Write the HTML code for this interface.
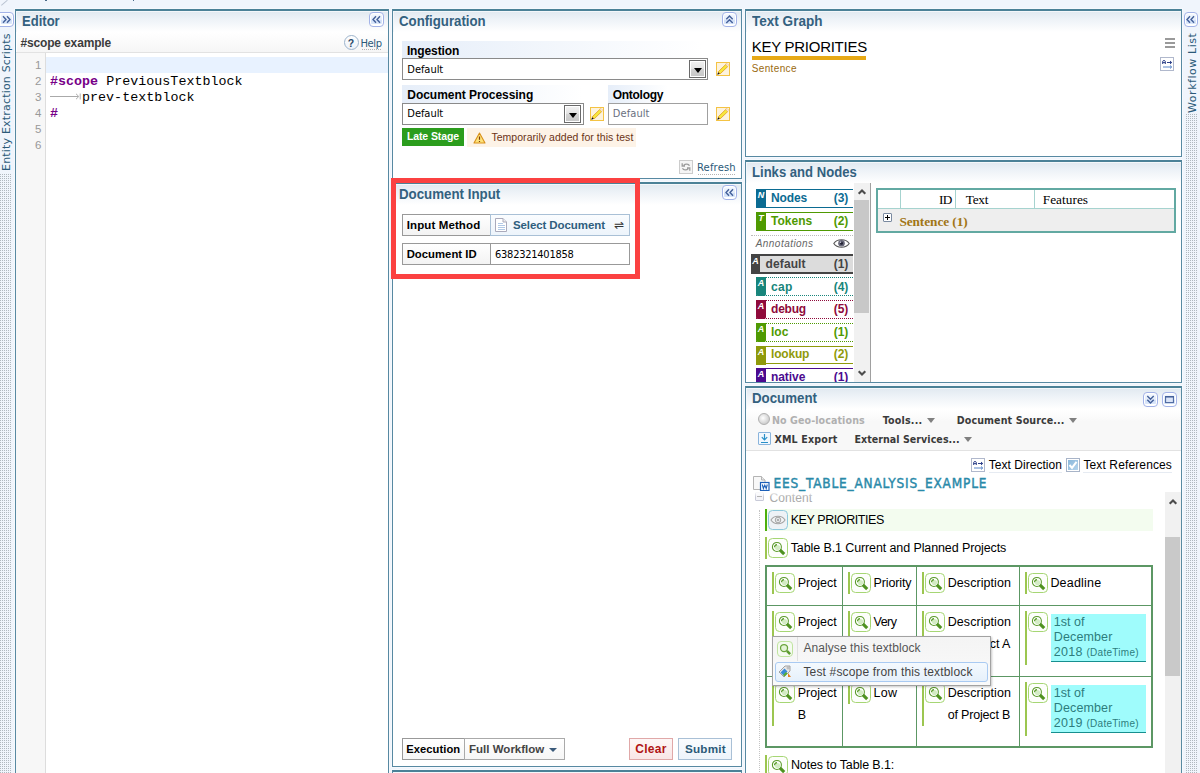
<!DOCTYPE html>
<html><head><meta charset="utf-8"><title>Entity Extraction</title>
<style>
*{box-sizing:border-box;margin:0;padding:0}
html,body{width:1200px;height:773px;overflow:hidden;background:#f0f5fc;font-family:"Liberation Sans",sans-serif;font-size:12px;color:#000}
body{position:relative}
.abs{position:absolute}
.t{position:absolute;white-space:nowrap;line-height:1}
.panel{position:absolute;border:1px solid #5789a2;border-top:2px solid #4b8197;background:#fff;box-shadow:0 0 0 1px #f6f9fd}
.panel .hd{position:absolute;left:0;right:0;top:0;height:21px;background:linear-gradient(#e2eaf1,#edf2f7 35%,#fff 100%);border-top:1px solid #f4f7fa;border-left:1px solid #f4f7fa}
.cbtn{position:absolute;width:15px;height:15px;border:1px solid #a3b3e8;border-radius:4px;background:linear-gradient(#fff 0,#eef4fd 20%,#e4edfb 50%,#cfdff8 51%,#dbe7fa 85%,#fff 86%);box-shadow:inset 0 0 0 1px #fff;overflow:hidden}
.vtext{position:absolute;white-space:nowrap;font-family:"DejaVu Sans",sans-serif;font-size:11px;color:#2b5a79;transform-origin:0 0;transform:rotate(-90deg);line-height:1}
.dots{position:absolute;background-image:radial-gradient(circle at .5px .5px,#b0b8be .55px,transparent .7px);background-size:2px 2px}
.lbl{position:absolute;height:18px;background:linear-gradient(90deg,#e6eef9,#fff)}
.sel{position:absolute;height:22px;border:1px solid #8a8a8a;background:#fff}
.dd{position:absolute;width:17px;height:18px;border:1px solid #6a6a6a;box-shadow:inset 0 0 0 1px #fff;background:linear-gradient(#f3f3f3,#e2e2e2 50%,#d3d3d3 51%,#c6c6c6)}
.dd:after{content:"";position:absolute;left:4px;top:7px;border:4px solid transparent;border-top:5px solid #000;border-bottom:0}
.mbtn{position:absolute;width:20px;height:20px;border:1.200px solid #a6d674;border-radius:4.500px;background:#fdfefb}
.mbtn svg{position:absolute;left:-1.200px;top:-1.200px}
.cell{position:absolute;border:1px solid #999;height:22px}
.tri{position:absolute;width:0;height:0;border:4.5px solid transparent;border-top:5px solid #808080;border-bottom:0}
.li{position:absolute;height:19px}
.li i{position:absolute;left:0;top:-1px;width:10px;height:19px;font-size:9px;color:#fff;line-height:13px;text-align:center;font-style:italic;font-weight:bold}
</style></head><body>
<div class="abs" style="left:1px;top:4.500px;width:8px;height:1.300px;background:#b9c3d1;transform:rotate(-40deg);transform-origin:0 0"></div><div class="abs" style="left:45px;top:0;width:1.500px;height:1px;background:#4a6a88"></div><div class="abs" style="left:132.500px;top:0;width:1.500px;height:1px;background:#4a6a88"></div>

<div class="cbtn" style="left:-1px;top:12px;width:15px;border-radius:0 4px 4px 0;"><svg viewBox="0 0 15 15" width="15" height="15" style="position:absolute;left:-1px;top:-1px" fill="none" stroke="#44609a" stroke-width="1.400"><path d="M4 4.200l3 3.300-3 3.300M8 4.200l3 3.300-3 3.300" /></svg></div>
<div class="vtext" style="left:.500px;top:171px;letter-spacing:.19px">Entity Extraction Scripts</div>
<div class="dots" style="left:0;top:174px;width:12px;height:600px"></div>
<div class="panel" style="left:15px;top:9px;width:374px;height:780px"><div class="hd"></div></div>
<div class="abs" style="left:17px;top:32px;width:371px;height:20px;background:linear-gradient(#fff,#f6f6f6)"></div>
<span class="t" style='left:22.40px;top:14.00px;font-size:14.2px;color:#33617f;font-weight:bold;transform:scaleX(0.9199);transform-origin:0 0;'>Editor</span>
<div class="cbtn" style="left:369px;top:12px;width:15px;"><svg viewBox="0 0 15 15" width="15" height="15" style="position:absolute;left:-1px;top:-1px" fill="none" stroke="#44609a" stroke-width="1.400"><path d="M7 4.200L4 7.500l3 3.300M11 4.200L8 7.500l3 3.300" /></svg></div>
<span class="t" style='left:20.40px;top:37.00px;font-size:12px;color:#3c3c3c;font-weight:bold;letter-spacing:-0.144px;'>#scope example</span>
<div class="abs" style="left:344px;top:35px;width:15px;height:15px;border:1px solid #9db4cc;border-radius:50%;background:linear-gradient(#fff,#eef2f8)"></div>
<span class="t" style='left:347.70px;top:38.00px;font-size:10.5px;color:#2b4a6a;font-weight:bold;letter-spacing:0.778px;'>?</span>
<span class="t" style='left:360.40px;top:39.00px;font-size:10px;font-family:"DejaVu Sans",sans-serif;color:#2b5a79;letter-spacing:-0.403px;'>Help</span>
<div class="abs" style="left:362px;top:49px;width:20px;height:1px;background:repeating-linear-gradient(90deg,#b4b4b4 0 1px,transparent 1px 2px)"></div>
<div class="abs" style="left:16px;top:52px;width:372px;height:1px;background:#e2e2e2"></div>
<div class="abs" style="left:16px;top:53px;width:30px;height:740px;background:#f7f7f7;border-right:1px solid #ddd"></div>
<div class="abs" style="left:46px;top:57px;width:342px;height:16px;background:#e8f2ff"></div>
<div class="t" style="left:16px;width:25.500px;text-align:right;top:59.5px;font-size:11.500px;color:#999;font-family:"DejaVu Sans Condensed","DejaVu Sans",sans-serif">1</div>
<div class="t" style="left:16px;width:25.500px;text-align:right;top:75.5px;font-size:11.500px;color:#999;font-family:"DejaVu Sans Condensed","DejaVu Sans",sans-serif">2</div>
<div class="t" style="left:16px;width:25.500px;text-align:right;top:91.5px;font-size:11.500px;color:#999;font-family:"DejaVu Sans Condensed","DejaVu Sans",sans-serif">3</div>
<div class="t" style="left:16px;width:25.500px;text-align:right;top:107.5px;font-size:11.500px;color:#999;font-family:"DejaVu Sans Condensed","DejaVu Sans",sans-serif">4</div>
<div class="t" style="left:16px;width:25.500px;text-align:right;top:123.5px;font-size:11.500px;color:#999;font-family:"DejaVu Sans Condensed","DejaVu Sans",sans-serif">5</div>
<div class="t" style="left:16px;width:25.500px;text-align:right;top:139.5px;font-size:11.500px;color:#999;font-family:"DejaVu Sans Condensed","DejaVu Sans",sans-serif">6</div>
<span class="t" style='left:50.00px;top:75.00px;font-size:13.33px;font-family:"Liberation Mono",monospace;letter-spacing:0.026px;'><span style="color:#770088;font-weight:bold">#scope</span> PreviousTextblock</span>
<div class="abs" style="left:50px;top:96px;width:28px;height:1px;background:#aaa"></div>
<svg class="abs" style="left:76px;top:93px" width="5" height="7" viewBox="0 0 5 7" fill="none" stroke="#999" stroke-width=".8"><path d="M0 .800l2.800 2.700L0 6.200M4.200 .500v6"/></svg>
<span class="t" style='left:81.90px;top:91.00px;font-size:13.33px;font-family:"Liberation Mono",monospace;letter-spacing:0.051px;'>prev-textblock</span>
<span class="t" style='left:50.00px;top:107.00px;font-size:13.33px;font-family:"Liberation Mono",monospace;color:#770088;font-weight:bold;letter-spacing:0.600px;'>#</span>
<div class="panel" style="left:392px;top:9px;width:350px;height:170px"><div class="hd"></div></div>
<span class="t" style='left:398.60px;top:14.00px;font-size:14.2px;color:#33617f;font-weight:bold;transform:scaleX(0.9323);transform-origin:0 0;'>Configuration</span>
<div class="cbtn" style="left:722px;top:12px;width:15px;"><svg viewBox="0 0 15 15" width="15" height="15" style="position:absolute;left:-1px;top:-1px" fill="none" stroke="#44609a" stroke-width="1.400"><path d="M4.300 7.200L7.500 4l3.200 3.200M4.300 11L7.500 7.800l3.200 3.200" /></svg></div>
<div class="lbl" style="left:402px;top:41px;width:300px"></div>
<span class="t" style='left:406.90px;top:45.00px;font-size:12px;font-weight:bold;letter-spacing:-0.116px;'>Ingestion</span>
<div class="sel" style="left:402px;top:58px;width:306px"></div><div class="dd" style="left:689px;top:60px"></div>
<span class="t" style='left:407.30px;top:64.00px;font-size:11px;font-family:"DejaVu Sans Condensed","DejaVu Sans",sans-serif;letter-spacing:-0.039px;'>Default</span>
<div class="abs" style="left:716px;top:62px;width:14px;height:14px"><svg viewBox="0 0 14 14" width="14" height="14"><rect x=".5" y=".5" width="13" height="13" fill="#fdf3dd" stroke="#f4c344"/><path d="M1.200 12.800l1-3 2 2z" fill="#111"/><path d="M2.200 9.800l7.600-7.400 2.100 2-7.700 7.400z" fill="#f6e83c" stroke="#e39a1e" stroke-width=".8"/><path d="M9.800 2.400l1.100-1 2 2-1 1z" fill="#fff" stroke="#e8b070" stroke-width=".7"/></svg></div>
<div class="lbl" style="left:402px;top:85px;width:180px"></div>
<span class="t" style='left:407.30px;top:89.00px;font-size:12px;font-weight:bold;letter-spacing:-0.042px;'>Document Processing</span>
<div class="sel" style="left:402px;top:103px;width:182px"></div><div class="dd" style="left:564px;top:105px"></div>
<span class="t" style='left:407.30px;top:108.00px;font-size:11px;font-family:"DejaVu Sans Condensed","DejaVu Sans",sans-serif;letter-spacing:-0.039px;'>Default</span>
<div class="abs" style="left:590px;top:107px;width:14px;height:14px"><svg viewBox="0 0 14 14" width="14" height="14"><rect x=".5" y=".5" width="13" height="13" fill="#fdf3dd" stroke="#f4c344"/><path d="M1.200 12.800l1-3 2 2z" fill="#111"/><path d="M2.200 9.800l7.600-7.400 2.100 2-7.700 7.400z" fill="#f6e83c" stroke="#e39a1e" stroke-width=".8"/><path d="M9.800 2.400l1.100-1 2 2-1 1z" fill="#fff" stroke="#e8b070" stroke-width=".7"/></svg></div>
<div class="lbl" style="left:608px;top:85px;width:60px"></div>
<span class="t" style='left:612.80px;top:89.00px;font-size:12px;font-weight:bold;letter-spacing:-0.296px;'>Ontology</span>
<div class="sel" style="left:608px;top:103px;width:100px;border-color:#a0a0a0"></div>
<span class="t" style='left:612.80px;top:108.00px;font-size:11px;font-family:"DejaVu Sans Condensed","DejaVu Sans",sans-serif;color:#6a7080;letter-spacing:0.090px;'>Default</span>
<div class="abs" style="left:716px;top:107px;width:14px;height:14px"><svg viewBox="0 0 14 14" width="14" height="14"><rect x=".5" y=".5" width="13" height="13" fill="#fdf3dd" stroke="#f4c344"/><path d="M1.200 12.800l1-3 2 2z" fill="#111"/><path d="M2.200 9.800l7.600-7.400 2.100 2-7.700 7.400z" fill="#f6e83c" stroke="#e39a1e" stroke-width=".8"/><path d="M9.800 2.400l1.100-1 2 2-1 1z" fill="#fff" stroke="#e8b070" stroke-width=".7"/></svg></div>
<div class="abs" style="left:402px;top:128px;width:62px;height:18px;background:#2b9d1d"></div>
<span class="t" style='left:406.90px;top:131.00px;font-size:10.5px;color:#fff;font-weight:bold;letter-spacing:-0.091px;'>Late Stage</span>
<div class="abs" style="left:467px;top:128px;width:169px;height:19px;background:#fdf3e7"></div>
<svg class="abs" style="left:473px;top:132px" width="13" height="12" viewBox="0 0 13 12"><path d="M6.500 1L12 11H1z" fill="#fde27a" stroke="#d9901a" stroke-width="1.100" stroke-linejoin="round"/><path d="M6.500 4.500v3.300M6.500 9v1" stroke="#7a3a0a" stroke-width="1.200"/></svg>
<span class="t" style='left:491.40px;top:132.00px;font-size:10.5px;color:#6b3316;letter-spacing:0.043px;'>Temporarily added for this test</span>
<div class="abs" style="left:679px;top:160px;width:14px;height:14px;border:1px solid #ccc;background:#f5f5f5"></div>
<svg class="abs" style="left:681px;top:162px" width="10" height="10" viewBox="0 0 10 10" fill="none" stroke="#9c9c9c" stroke-width="1.300"><path d="M8.500 3.800C7.500 1.800 4.500 1.500 2.800 3.200M1.200 1.200v2.800h2.800M1.500 6.200C2.500 8.200 5.500 8.500 7.200 6.800M8.800 8.800V6H6"/></svg>
<span class="t" style='left:696.90px;top:163.00px;font-size:10px;font-family:"DejaVu Sans",sans-serif;color:#2b5a79;letter-spacing:0.176px;'>Refresh</span>
<div class="abs" style="left:698px;top:174px;width:38px;height:1px;background:repeating-linear-gradient(90deg,#b4b4b4 0 1px,transparent 1px 2px)"></div>
<div class="panel" style="left:392px;top:182px;width:350px;height:585px"><div class="hd"></div></div>
<span class="t" style='left:398.90px;top:187.00px;font-size:14.2px;color:#33617f;font-weight:bold;transform:scaleX(0.9372);transform-origin:0 0;'>Document Input</span>
<div class="cbtn" style="left:722px;top:185px;width:15px;"><svg viewBox="0 0 15 15" width="15" height="15" style="position:absolute;left:-1px;top:-1px" fill="none" stroke="#44609a" stroke-width="1.400"><path d="M7 4.200L4 7.500l3 3.300M11 4.200L8 7.500l3 3.300" /></svg></div>
<div class="cell" style="left:402px;top:214px;width:89px;background:linear-gradient(#fff,#f3f3f3)"></div>
<span class="t" style='left:406.70px;top:220.00px;font-size:11.5px;font-weight:bold;letter-spacing:0.118px;'>Input Method</span>
<div class="cell" style="left:490px;top:214px;width:140px;border-color:#a9c0d6;background:linear-gradient(#fafcfe,#edf4fb)"></div>
<svg class="abs" style="left:495px;top:218px" width="12" height="14" viewBox="0 0 12 14"><path d="M.500 .500h7.500l3.500 3.500v9.500h-11z" fill="#fff" stroke="#aab" /><path d="M8 .500v3.500h3.500" fill="#eee" stroke="#aab"/><path d="M2.500 5.500h5M2.500 7.500h7M2.500 9.500h7M2.500 11.500h7" stroke="#9dbbe0" stroke-width=".8" shape-rendering="crispEdges"/></svg>
<span class="t" style='left:512.90px;top:220.00px;font-size:11.5px;color:#2f5e7d;font-weight:bold;letter-spacing:-0.088px;'>Select Document</span>
<span class="t" style='left:614.20px;top:219.00px;font-size:12px;font-family:"DejaVu Sans",sans-serif;color:#333;letter-spacing:0.137px;'>&#x21CC;</span>
<div class="cell" style="left:402px;top:243px;width:89px;background:linear-gradient(#fff,#f3f3f3)"></div>
<span class="t" style='left:406.70px;top:249.00px;font-size:11.3px;font-weight:bold;letter-spacing:0.021px;'>Document ID</span>
<div class="cell" style="left:490px;top:243px;width:140px"></div>
<span class="t" style='left:495.00px;top:249.00px;font-size:11px;font-family:"DejaVu Sans Condensed","DejaVu Sans",sans-serif;letter-spacing:-0.250px;'>6382321401858</span>
<div class="cell" style="left:402px;top:738px;width:63px;background:linear-gradient(#fff,#f6f6f6)"></div>
<span class="t" style='left:406.20px;top:744.00px;font-size:11.2px;font-weight:bold;letter-spacing:0.059px;'>Execution</span>
<div class="cell" style="left:464px;top:738px;width:101px;background:linear-gradient(#fff,#f6f6f6);border-color:#aaa"></div>
<span class="t" style='left:469.00px;top:744.00px;font-size:11.5px;color:#444;font-weight:bold;letter-spacing:0.010px;'>Full Workflow</span>
<div class="tri" style="left:549px;top:748px;border-width:4px;border-top:4.500px solid #3a5a7a"></div>
<div class="cell" style="left:629px;top:738px;width:44px;border-color:#e0a8a8;background:linear-gradient(#fdf6f6,#f9e6e6)"></div>
<span class="t" style='left:635.30px;top:743.00px;font-size:12px;color:#b01414;font-weight:bold;letter-spacing:0.254px;'>Clear</span>
<div class="cell" style="left:678px;top:738px;width:54px;border-color:#a9c0d6;background:linear-gradient(#fafcfe,#edf4fb)"></div>
<span class="t" style='left:685.00px;top:743.00px;font-size:11.7px;color:#2b5a79;font-weight:bold;letter-spacing:0.198px;'>Submit</span>
<div class="panel" style="left:392px;top:770px;width:350px;height:30px"><div class="hd"></div></div>
<div class="abs" style="left:391px;top:178px;width:249px;height:101px;border:5px solid #fb4141"></div>
<div class="panel" style="left:745px;top:9px;width:437px;height:148px"><div class="hd"></div></div>
<span class="t" style='left:751.70px;top:14.00px;font-size:14.2px;color:#33617f;font-weight:bold;transform:scaleX(0.9547);transform-origin:0 0;'>Text Graph</span>
<span class="t" style='left:751.70px;top:39.00px;font-size:15px;letter-spacing:-0.267px;'>KEY PRIORITIES</span>
<div class="abs" style="left:752px;top:56px;width:114px;height:4px;background:#e7a916"></div>
<span class="t" style='left:751.70px;top:64.00px;font-size:10px;color:#9a6a10;letter-spacing:0.367px;'>Sentence</span>
<div class="abs" style="left:1165px;top:38px;width:10px;height:2px;background:#9a9a9a;box-shadow:0 4px 0 #9a9a9a,0 8px 0 #9a9a9a"></div>
<div class="abs" style="left:1160px;top:57px;width:14px;height:14px;border:1px solid #b0b8cc;background:#fff"></div>
<svg class="abs" style="left:1162px;top:59px" width="11" height="10" viewBox="0 0 11 10" fill="none" stroke="#2c3f88" stroke-width="1"><path d="M.700 5V2.300C.700 1.300 3.300 1.300 3.300 2.300V5M.700 3.600h2.600M5 3.500h4.500M8 2l1.700 1.500L8 5"/><path d="M1 8h8.500M8 6.500L9.700 8 8 9.500" stroke="#5a86c8"/></svg>
<div class="panel" style="left:745px;top:160px;width:437px;height:223px"><div class="hd"></div></div>
<span class="t" style='left:751.70px;top:165.00px;font-size:14.2px;color:#33617f;font-weight:bold;transform:scaleX(0.9222);transform-origin:0 0;'>Links and Nodes</span>
<div class="abs" style="left:746px;top:183px;width:125px;height:199px;overflow:hidden">
<div class="li" style="left:10px;width:97px;top:6px;height:19px;border-top:1px solid #0b6b92;border-bottom:1px solid #0b6b92"><i style="background:#0b6b92;">N</i></div>
<div class="li" style="left:10px;width:97px;top:29px;height:19px;border-top:1px solid #4f9a02;border-bottom:1px solid #4f9a02"><i style="background:#4f9a02;">T</i></div>
<div class="li" style="left:5px;width:102px;top:71px;height:20px;background:#dcdcdc;border-top:2px solid #444;border-bottom:2px solid #444"><i style="background:#444;top:-2px;height:20px;width:9px;line-height:14px">A</i></div>
<div class="li" style="left:10px;width:97px;top:94px;height:19px;border-top:1px dotted #17857b;border-bottom:1px dotted #17857b"><i style="background:#17857b;border-radius:0 0 3px 3px / 0 0 2px 2px;">A</i></div>
<div class="li" style="left:10px;width:97px;top:117px;height:19px;border-top:1px dotted #8f0a3b;border-bottom:1px dotted #8f0a3b"><i style="background:#8f0a3b;border-radius:0 0 3px 3px / 0 0 2px 2px;">A</i></div>
<div class="li" style="left:10px;width:97px;top:140px;height:19px;border-top:1px dotted #4f9a02;border-bottom:1px dotted #4f9a02"><i style="background:#4f9a02;border-radius:0 0 3px 3px / 0 0 2px 2px;">A</i></div>
<div class="li" style="left:10px;width:97px;top:163px;height:18px;border-top:1px solid #8f9a0a;border-bottom:1px solid #8f9a0a"><i style="background:#8f9a0a;">A</i></div>
<div class="li" style="left:10px;width:97px;top:185px;height:19px;border-top:1px solid #4b0a8f;border-bottom:1px solid #4b0a8f"><i style="background:#4b0a8f;">A</i></div>
<div class="abs" style="left:5px;top:52px;width:102px;height:0px;border-top:1px dotted #bbb"></div>
<svg class="abs" style="left:87px;top:55px" width="17" height="11" viewBox="0 0 17 11"><path d="M.800 5.500C4 .500 13 .500 16.200 5.500C13 10.500 4 10.500 .800 5.500z" fill="#fff" stroke="#555" stroke-width="1.100"/><circle cx="8.500" cy="5.300" r="3.300" fill="#667"/><circle cx="8.500" cy="5.300" r="1.500" fill="#223"/><circle cx="7.500" cy="4.300" r=".8" fill="#ccd"/></svg>
<div class="abs" style="left:108px;top:0px;width:17px;height:200px;background:#f1f1f1;border-right:1px solid #a0a0a0"></div>
<div class="abs" style="left:108px;top:17px;width:15px;height:113px;background:#c8c8c8"></div>
<svg class="abs" style="left:111px;top:5px" width="10" height="7" viewBox="0 0 10 7" fill="none" stroke="#4c4c4c" stroke-width="2.100"><path d="M1.700 5.700l3.300-3.300 3.300 3.300"/></svg>
<svg class="abs" style="left:111px;top:187px" width="10" height="7" viewBox="0 0 10 7" fill="none" stroke="#4c4c4c" stroke-width="2.100"><path d="M1.700 1.300l3.300 3.300 3.300-3.300"/></svg>
</div>
<div class="abs" style="left:746px;top:183px;width:108px;height:199px;overflow:hidden"><div class="abs" style="left:-746px;top:-183px">
<span class="t" style='left:771.00px;top:192.00px;font-size:12px;color:#0b6b92;font-weight:bold;letter-spacing:-0.097px;'>Nodes</span>
<span class="t" style='left:833.70px;top:192.00px;font-size:12px;color:#0b6b92;font-weight:bold;letter-spacing:-0.024px;'>(3)</span>
<span class="t" style='left:771.00px;top:215.00px;font-size:12px;color:#4f9a02;font-weight:bold;letter-spacing:0.029px;'>Tokens</span>
<span class="t" style='left:833.70px;top:215.00px;font-size:12px;color:#4f9a02;font-weight:bold;letter-spacing:-0.024px;'>(2)</span>
<span class="t" style='left:765.60px;top:258.00px;font-size:12px;color:#444;font-weight:bold;letter-spacing:0.094px;'>default</span>
<span class="t" style='left:833.70px;top:258.00px;font-size:12px;color:#444;font-weight:bold;letter-spacing:-0.024px;'>(1)</span>
<span class="t" style='left:771.00px;top:281.00px;font-size:12px;color:#17857b;font-weight:bold;letter-spacing:0.304px;'>cap</span>
<span class="t" style='left:833.70px;top:281.00px;font-size:12px;color:#17857b;font-weight:bold;letter-spacing:-0.024px;'>(4)</span>
<span class="t" style='left:771.00px;top:303.00px;font-size:12px;color:#8f0a3b;font-weight:bold;letter-spacing:-0.200px;'>debug</span>
<span class="t" style='left:833.70px;top:303.00px;font-size:12px;color:#8f0a3b;font-weight:bold;letter-spacing:-0.024px;'>(5)</span>
<span class="t" style='left:771.00px;top:326.00px;font-size:12px;color:#4f9a02;font-weight:bold;letter-spacing:0.019px;'>loc</span>
<span class="t" style='left:833.70px;top:326.00px;font-size:12px;color:#4f9a02;font-weight:bold;letter-spacing:-0.024px;'>(1)</span>
<span class="t" style='left:771.00px;top:348.00px;font-size:12px;color:#8f9a0a;font-weight:bold;letter-spacing:-0.188px;'>lookup</span>
<span class="t" style='left:833.70px;top:348.00px;font-size:12px;color:#8f9a0a;font-weight:bold;letter-spacing:-0.024px;'>(2)</span>
<span class="t" style='left:771.00px;top:371.00px;font-size:12px;color:#4b0a8f;font-weight:bold;letter-spacing:-0.065px;'>native</span>
<span class="t" style='left:833.70px;top:371.00px;font-size:12px;color:#4b0a8f;font-weight:bold;letter-spacing:-0.024px;'>(1)</span>
<span class="t" style='left:755.70px;top:239.00px;font-size:10px;color:#666;font-style:italic;letter-spacing:0.461px;'>Annotations</span>
</div></div>
<div class="abs" style="left:876px;top:188px;width:300px;height:45px;border:2px solid #62a9a2;background:#fff"></div>
<div class="abs" style="left:878px;top:208px;width:296px;height:23px;background:#eee;border-top:1px solid #a6d3cf"></div>
<div class="abs" style="left:900px;top:190px;width:1px;height:18px;background:#a6d3cf"></div>
<div class="abs" style="left:955px;top:190px;width:1px;height:18px;background:#a6d3cf"></div>
<div class="abs" style="left:1034px;top:190px;width:1px;height:18px;background:#a6d3cf"></div>
<span class="t" style='left:938.90px;top:193.00px;font-size:13.3px;font-family:"Liberation Serif",serif;letter-spacing:-0.666px;'>ID</span>
<span class="t" style='left:965.70px;top:193.00px;font-size:13.3px;font-family:"Liberation Serif",serif;letter-spacing:-0.213px;'>Text</span>
<span class="t" style='left:1042.70px;top:193.00px;font-size:13.3px;font-family:"Liberation Serif",serif;letter-spacing:0.044px;'>Features</span>
<div class="abs" style="left:883px;top:213px;width:9px;height:9px;border:1px solid #7a8aa0;background:#fff;border-radius:1px"></div><div class="abs" style="left:885px;top:217px;width:5px;height:1px;background:#000"></div><div class="abs" style="left:887px;top:215px;width:1px;height:5px;background:#000"></div>
<span class="t" style='left:899.40px;top:215.00px;font-size:13.3px;font-family:"Liberation Serif",serif;color:#a17515;font-weight:bold;letter-spacing:-0.072px;'>Sentence (1)</span>
<div class="panel" style="left:745px;top:386px;width:437px;height:400px"><div class="hd"></div></div>
<div class="abs" style="left:746px;top:410px;width:435px;height:41px;background:linear-gradient(#fff,#f8f8f8 30%);border-bottom:1px solid #e2e2e2"></div>
<span class="t" style='left:751.90px;top:391.00px;font-size:14.2px;color:#33617f;font-weight:bold;transform:scaleX(0.9369);transform-origin:0 0;'>Document</span>
<div class="cbtn" style="left:1143px;top:392px;width:15px;"><svg viewBox="0 0 15 15" width="15" height="15" style="position:absolute;left:-1px;top:-1px" fill="none" stroke="#44609a" stroke-width="1.400"><path d="M4.300 4L7.500 7.200 10.700 4M4.300 7.800L7.500 11l3.200-3.200" /></svg></div>
<div class="cbtn" style="left:1162px;top:392px;width:15px;"><svg viewBox="0 0 15 15" width="15" height="15" style="position:absolute;left:-1px;top:-1px" fill="none" stroke="#44609a" stroke-width="1.400"><rect x="3.600" y="4.600" width="7.800" height="6" fill="#dbe5f8" stroke-width="1"/><path d="M3.200 4.800h8.600" stroke-width="1.600"/></svg></div>
<div class="abs" style="left:758px;top:413px;width:12px;height:12px;border-radius:50%;border:1px solid #b0b0b0;background:radial-gradient(circle at 40% 40%,#fff,#bbb)"></div>
<span class="t" style='left:771.90px;top:415.00px;font-size:10.6px;font-family:"DejaVu Sans Condensed","DejaVu Sans",sans-serif;color:#b0b0b0;font-weight:bold;letter-spacing:0.096px;'>No Geo-locations</span>
<span class="t" style='left:882.70px;top:415.00px;font-size:10.6px;font-family:"DejaVu Sans Condensed","DejaVu Sans",sans-serif;color:#3a3a3a;font-weight:bold;letter-spacing:0.200px;'>Tools...</span>
<div class="tri" style="left:927px;top:418px"></div>
<span class="t" style='left:956.70px;top:415.00px;font-size:10.6px;font-family:"DejaVu Sans Condensed","DejaVu Sans",sans-serif;color:#3a3a3a;font-weight:bold;letter-spacing:0.114px;'>Document Source...</span>
<div class="tri" style="left:1069px;top:418px"></div>
<div class="abs" style="left:758px;top:432px;width:13px;height:13px;border:1px solid #8ab4dc;background:#f2f8fe;border-radius:1px"></div>
<svg class="abs" style="left:760px;top:433px" width="9" height="11" viewBox="0 0 9 11" fill="none" stroke="#2a90c8" stroke-width="1.200"><path d="M4.500 1v5.500M1.800 4.200l2.700 2.700 2.700-2.700M1 9.500h7"/></svg>
<span class="t" style='left:774.40px;top:434.00px;font-size:10.6px;font-family:"DejaVu Sans Condensed","DejaVu Sans",sans-serif;color:#3a3a3a;font-weight:bold;letter-spacing:0.168px;'>XML Export</span>
<span class="t" style='left:854.40px;top:434.00px;font-size:10.6px;font-family:"DejaVu Sans Condensed","DejaVu Sans",sans-serif;color:#3a3a3a;font-weight:bold;letter-spacing:0.043px;'>External Services...</span>
<div class="tri" style="left:964px;top:437px"></div>
<div class="abs" style="left:971px;top:458px;width:14px;height:14px;border:1px solid #b0b8cc;background:#fff"></div>
<svg class="abs" style="left:973px;top:460px" width="11" height="10" viewBox="0 0 11 10" fill="none" stroke="#2c3f88" stroke-width="1"><path d="M.700 5V2.300C.700 1.300 3.300 1.300 3.300 2.300V5M.700 3.600h2.600M5 3.500h4.500M8 2l1.700 1.500L8 5"/><path d="M1 8h8.500M8 6.500L9.700 8 8 9.500" stroke="#5a86c8"/></svg>
<span class="t" style='left:988.80px;top:459.00px;font-size:12px;letter-spacing:0.028px;border-bottom:1px solid #e6ebf2;padding-bottom:1px;'>Text Direction</span>
<div class="abs" style="left:1066px;top:458px;width:14px;height:14px;border:1px solid #a8b4c8;background:linear-gradient(135deg,#86b4d8,#b8d6ee);box-shadow:inset 0 0 0 1px #fff"></div>
<svg class="abs" style="left:1068px;top:460px" width="10" height="10" viewBox="0 0 10 10" fill="none" stroke="#fff" stroke-width="2"><path d="M1.500 5l2.500 2.800 4.500-6"/></svg>
<span class="t" style='left:1083.40px;top:459.00px;font-size:12px;letter-spacing:0.125px;border-bottom:1px solid #e6ebf2;padding-bottom:1px;'>Text References</span>
<div class="abs" style="left:755px;top:492px;width:9px;height:9px;border:1px solid #c8cad8;background:#f4f4f8;border-radius:1px"></div><div class="abs" style="left:757px;top:496px;width:5px;height:1px;background:#aaa"></div>
<span class="t" style='left:769.40px;top:492.00px;font-size:12px;color:#aaa;letter-spacing:0.124px;'>Content</span>
<div class="abs" style="left:746px;top:489px;width:419px;height:8px;background:linear-gradient(#fff 35%,rgba(255,255,255,0))"></div>
<svg class="abs" style="left:753px;top:476px" width="17" height="15" viewBox="0 0 17 15"><path d="M.500 .500h8l3.500 3.500v9.500h-11.500z" fill="#f8f8f8" stroke="#b4b4b4"/><path d="M8.500 .500v3.500h3.500" fill="#e8e8e8" stroke="#b4b4b4"/><rect x="7.500" y="6.500" width="8.500" height="8" fill="#fff" stroke="#1c5fb8" stroke-width="1.200"/><path d="M9.300 8.500l1.100 4 1.400-3.400 1.400 3.400 1.100-4" fill="none" stroke="#1c5fb8" stroke-width="1.100"/></svg>
<span class="t" style='left:773.60px;top:477.00px;font-size:13.5px;font-family:"DejaVu Sans Condensed","DejaVu Sans",sans-serif;color:#2a8aa9;letter-spacing:0.818px;-webkit-text-stroke:.42px #2a8aa9;'>EES_TABLE_ANALYSIS_EXAMPLE</span>
<div class="abs" style="left:759px;top:510px;width:1px;height:280px;border-left:1px dotted #c4c4c4"></div>
<div class="abs" style="left:767px;top:509px;width:386px;height:22px;background:#f3fcef"></div>
<div class="abs" style="left:765px;top:509px;width:2px;height:22px;background:#4cb00c"></div>
<div class="mbtn" style="left:768px;top:510px;border-color:#8cc8dc;background:#eef2f6"><svg viewBox="0 0 20 20" width="20" height="20"><path d="M3 10C6 5 14 5 17 10C14 15 6 15 3 10z" fill="#f4f6f8" stroke="#a4a4a4" stroke-width="1.100"/><circle cx="10" cy="10" r="2.800" fill="#e4e6e8" stroke="#a4a4a4" stroke-width="1"/><circle cx="10" cy="10" r="1.100" fill="#a0a0a0"/></svg></div>
<span class="t" style='left:790.70px;top:514.00px;font-size:12.5px;letter-spacing:-0.422px;'>KEY PRIORITIES</span>
<div class="abs" style="left:765px;top:537px;width:2px;height:22px;background:#9cc650"></div>
<div class="mbtn" style="left:768px;top:538px"><svg viewBox="0 0 20 20" width="20" height="20"><circle cx="8.900" cy="8.900" r="4.500" fill="#fbfef8" stroke="#5b9a2b" stroke-width="1.050"/><circle cx="9.500" cy="9.500" r="2.600" fill="#d3ecc3"/><path d="M6.500 9.300a2.800 2.800 0 0 1 2.500-2.700" fill="none" stroke="#5b9a2b" stroke-width="1.100"/><path d="M11.900 11.900l4.300 4.300" stroke="#4f9220" stroke-width="3.100"/></svg></div>
<span class="t" style='left:790.70px;top:542.00px;font-size:12.5px;letter-spacing:-0.107px;'>Table B.1 Current and Planned Projects</span>
<div class="abs" style="left:765px;top:565px;width:388px;height:183px;border:2px solid #5c9764"></div>
<div class="abs" style="left:842px;top:567px;width:1px;height:179px;background:#5c9764"></div>
<div class="abs" style="left:916px;top:567px;width:1px;height:179px;background:#5c9764"></div>
<div class="abs" style="left:1019px;top:567px;width:1px;height:179px;background:#5c9764"></div>
<div class="abs" style="left:767px;top:605px;width:384px;height:1px;background:#5c9764"></div>
<div class="abs" style="left:767px;top:676px;width:384px;height:1px;background:#5c9764"></div>
<div class="abs" style="left:772px;top:572px;width:2px;height:22px;background:#9cc650"></div><div class="mbtn" style="left:775px;top:573px"><svg viewBox="0 0 20 20" width="20" height="20"><circle cx="8.900" cy="8.900" r="4.500" fill="#fbfef8" stroke="#5b9a2b" stroke-width="1.050"/><circle cx="9.500" cy="9.500" r="2.600" fill="#d3ecc3"/><path d="M6.500 9.300a2.800 2.800 0 0 1 2.500-2.700" fill="none" stroke="#5b9a2b" stroke-width="1.100"/><path d="M11.900 11.900l4.300 4.300" stroke="#4f9220" stroke-width="3.100"/></svg></div>
<div class="abs" style="left:848px;top:572px;width:2px;height:22px;background:#9cc650"></div><div class="mbtn" style="left:851px;top:573px"><svg viewBox="0 0 20 20" width="20" height="20"><circle cx="8.900" cy="8.900" r="4.500" fill="#fbfef8" stroke="#5b9a2b" stroke-width="1.050"/><circle cx="9.500" cy="9.500" r="2.600" fill="#d3ecc3"/><path d="M6.500 9.300a2.800 2.800 0 0 1 2.500-2.700" fill="none" stroke="#5b9a2b" stroke-width="1.100"/><path d="M11.900 11.900l4.300 4.300" stroke="#4f9220" stroke-width="3.100"/></svg></div>
<div class="abs" style="left:922px;top:572px;width:2px;height:22px;background:#9cc650"></div><div class="mbtn" style="left:925px;top:573px"><svg viewBox="0 0 20 20" width="20" height="20"><circle cx="8.900" cy="8.900" r="4.500" fill="#fbfef8" stroke="#5b9a2b" stroke-width="1.050"/><circle cx="9.500" cy="9.500" r="2.600" fill="#d3ecc3"/><path d="M6.500 9.300a2.800 2.800 0 0 1 2.500-2.700" fill="none" stroke="#5b9a2b" stroke-width="1.100"/><path d="M11.900 11.900l4.300 4.300" stroke="#4f9220" stroke-width="3.100"/></svg></div>
<div class="abs" style="left:1025px;top:572px;width:2px;height:22px;background:#9cc650"></div><div class="mbtn" style="left:1028px;top:573px"><svg viewBox="0 0 20 20" width="20" height="20"><circle cx="8.900" cy="8.900" r="4.500" fill="#fbfef8" stroke="#5b9a2b" stroke-width="1.050"/><circle cx="9.500" cy="9.500" r="2.600" fill="#d3ecc3"/><path d="M6.500 9.300a2.800 2.800 0 0 1 2.500-2.700" fill="none" stroke="#5b9a2b" stroke-width="1.100"/><path d="M11.900 11.900l4.300 4.300" stroke="#4f9220" stroke-width="3.100"/></svg></div>
<span class="t" style='left:797.70px;top:577.00px;font-size:12.5px;letter-spacing:0.042px;'>Project</span>
<span class="t" style='left:873.60px;top:577.00px;font-size:12.5px;letter-spacing:-0.138px;'>Priority</span>
<span class="t" style='left:947.70px;top:577.00px;font-size:12.5px;letter-spacing:0.070px;'>Description</span>
<span class="t" style='left:1050.40px;top:577.00px;font-size:12.5px;letter-spacing:0.195px;'>Deadline</span>
<div class="abs" style="left:772px;top:611px;width:2px;height:44px;background:#9cc650"></div><div class="mbtn" style="left:775px;top:612px"><svg viewBox="0 0 20 20" width="20" height="20"><circle cx="8.900" cy="8.900" r="4.500" fill="#fbfef8" stroke="#5b9a2b" stroke-width="1.050"/><circle cx="9.500" cy="9.500" r="2.600" fill="#d3ecc3"/><path d="M6.500 9.300a2.800 2.800 0 0 1 2.500-2.700" fill="none" stroke="#5b9a2b" stroke-width="1.100"/><path d="M11.900 11.900l4.300 4.300" stroke="#4f9220" stroke-width="3.100"/></svg></div>
<div class="abs" style="left:848px;top:611px;width:2px;height:44px;background:#9cc650"></div><div class="mbtn" style="left:851px;top:612px"><svg viewBox="0 0 20 20" width="20" height="20"><circle cx="8.900" cy="8.900" r="4.500" fill="#fbfef8" stroke="#5b9a2b" stroke-width="1.050"/><circle cx="9.500" cy="9.500" r="2.600" fill="#d3ecc3"/><path d="M6.500 9.300a2.800 2.800 0 0 1 2.500-2.700" fill="none" stroke="#5b9a2b" stroke-width="1.100"/><path d="M11.900 11.900l4.300 4.300" stroke="#4f9220" stroke-width="3.100"/></svg></div>
<div class="abs" style="left:922px;top:611px;width:2px;height:44px;background:#9cc650"></div><div class="mbtn" style="left:925px;top:612px"><svg viewBox="0 0 20 20" width="20" height="20"><circle cx="8.900" cy="8.900" r="4.500" fill="#fbfef8" stroke="#5b9a2b" stroke-width="1.050"/><circle cx="9.500" cy="9.500" r="2.600" fill="#d3ecc3"/><path d="M6.500 9.300a2.800 2.800 0 0 1 2.500-2.700" fill="none" stroke="#5b9a2b" stroke-width="1.100"/><path d="M11.900 11.900l4.300 4.300" stroke="#4f9220" stroke-width="3.100"/></svg></div>
<span class="t" style='left:797.70px;top:616.00px;font-size:12.5px;letter-spacing:0.042px;'>Project</span>
<span class="t" style='left:797.70px;top:638.00px;font-size:12.5px;letter-spacing:0.556px;'>A</span>
<span class="t" style='left:873.60px;top:616.00px;font-size:12.5px;letter-spacing:-0.554px;'>Very</span>
<span class="t" style='left:873.60px;top:638.00px;font-size:12.5px;letter-spacing:-0.430px;'>High</span>
<span class="t" style='left:947.70px;top:616.00px;font-size:12.5px;letter-spacing:0.070px;'>Description</span>
<span class="t" style='left:947.70px;top:638.00px;font-size:12.5px;letter-spacing:-0.120px;'>of Project A</span>
<div class="abs" style="left:1025px;top:611px;width:2px;height:54px;background:#9cc650"></div><div class="mbtn" style="left:1028px;top:612px"><svg viewBox="0 0 20 20" width="20" height="20"><circle cx="8.900" cy="8.900" r="4.500" fill="#fbfef8" stroke="#5b9a2b" stroke-width="1.050"/><circle cx="9.500" cy="9.500" r="2.600" fill="#d3ecc3"/><path d="M6.500 9.300a2.800 2.800 0 0 1 2.500-2.700" fill="none" stroke="#5b9a2b" stroke-width="1.100"/><path d="M11.900 11.900l4.300 4.300" stroke="#4f9220" stroke-width="3.100"/></svg></div>
<div class="abs" style="left:1051px;top:614px;width:95px;height:48px;background:#9ffcfc;border-bottom:1.500px solid #178f8f"></div>
<span class="t" style='left:1053.80px;top:616.00px;font-size:12.5px;color:#2d7d7d;letter-spacing:0.020px;'>1st of</span>
<span class="t" style='left:1053.80px;top:631.00px;font-size:12.5px;color:#2d7d7d;letter-spacing:0.129px;'>December</span>
<span class="t" style='left:1053.80px;top:646.00px;font-size:12.5px;color:#2d7d7d;letter-spacing:0.279px;'>2018 <span style="font-size:10px">(DateTime)</span></span>
<div class="abs" style="left:772px;top:682px;width:2px;height:44px;background:#9cc650"></div><div class="mbtn" style="left:775px;top:683px"><svg viewBox="0 0 20 20" width="20" height="20"><circle cx="8.900" cy="8.900" r="4.500" fill="#fbfef8" stroke="#5b9a2b" stroke-width="1.050"/><circle cx="9.500" cy="9.500" r="2.600" fill="#d3ecc3"/><path d="M6.500 9.300a2.800 2.800 0 0 1 2.500-2.700" fill="none" stroke="#5b9a2b" stroke-width="1.100"/><path d="M11.900 11.900l4.300 4.300" stroke="#4f9220" stroke-width="3.100"/></svg></div>
<div class="abs" style="left:848px;top:682px;width:2px;height:22px;background:#9cc650"></div><div class="mbtn" style="left:851px;top:683px"><svg viewBox="0 0 20 20" width="20" height="20"><circle cx="8.900" cy="8.900" r="4.500" fill="#fbfef8" stroke="#5b9a2b" stroke-width="1.050"/><circle cx="9.500" cy="9.500" r="2.600" fill="#d3ecc3"/><path d="M6.500 9.300a2.800 2.800 0 0 1 2.500-2.700" fill="none" stroke="#5b9a2b" stroke-width="1.100"/><path d="M11.900 11.900l4.300 4.300" stroke="#4f9220" stroke-width="3.100"/></svg></div>
<div class="abs" style="left:922px;top:682px;width:2px;height:44px;background:#9cc650"></div><div class="mbtn" style="left:925px;top:683px"><svg viewBox="0 0 20 20" width="20" height="20"><circle cx="8.900" cy="8.900" r="4.500" fill="#fbfef8" stroke="#5b9a2b" stroke-width="1.050"/><circle cx="9.500" cy="9.500" r="2.600" fill="#d3ecc3"/><path d="M6.500 9.300a2.800 2.800 0 0 1 2.500-2.700" fill="none" stroke="#5b9a2b" stroke-width="1.100"/><path d="M11.900 11.900l4.300 4.300" stroke="#4f9220" stroke-width="3.100"/></svg></div>
<span class="t" style='left:797.70px;top:687.00px;font-size:12.5px;letter-spacing:0.042px;'>Project</span>
<span class="t" style='left:797.70px;top:709.00px;font-size:12.5px;letter-spacing:0.556px;'>B</span>
<span class="t" style='left:873.60px;top:687.00px;font-size:12.5px;letter-spacing:0.254px;'>Low</span>
<span class="t" style='left:947.70px;top:687.00px;font-size:12.5px;letter-spacing:0.070px;'>Description</span>
<span class="t" style='left:947.70px;top:709.00px;font-size:12.5px;letter-spacing:-0.177px;'>of Project B</span>
<div class="abs" style="left:1025px;top:682px;width:2px;height:54px;background:#9cc650"></div><div class="mbtn" style="left:1028px;top:683px"><svg viewBox="0 0 20 20" width="20" height="20"><circle cx="8.900" cy="8.900" r="4.500" fill="#fbfef8" stroke="#5b9a2b" stroke-width="1.050"/><circle cx="9.500" cy="9.500" r="2.600" fill="#d3ecc3"/><path d="M6.500 9.300a2.800 2.800 0 0 1 2.500-2.700" fill="none" stroke="#5b9a2b" stroke-width="1.100"/><path d="M11.900 11.900l4.300 4.300" stroke="#4f9220" stroke-width="3.100"/></svg></div>
<div class="abs" style="left:1051px;top:685px;width:95px;height:48px;background:#9ffcfc;border-bottom:1.500px solid #178f8f"></div>
<span class="t" style='left:1053.80px;top:687.00px;font-size:12.5px;color:#2d7d7d;letter-spacing:0.020px;'>1st of</span>
<span class="t" style='left:1053.80px;top:702.00px;font-size:12.5px;color:#2d7d7d;letter-spacing:0.129px;'>December</span>
<span class="t" style='left:1053.80px;top:717.00px;font-size:12.5px;color:#2d7d7d;letter-spacing:0.279px;'>2019 <span style="font-size:10px">(DateTime)</span></span>
<div class="abs" style="left:765px;top:755px;width:2px;height:30px;background:#9cc650"></div>
<div class="mbtn" style="left:768px;top:756px"><svg viewBox="0 0 20 20" width="20" height="20"><circle cx="8.900" cy="8.900" r="4.500" fill="#fbfef8" stroke="#5b9a2b" stroke-width="1.050"/><circle cx="9.500" cy="9.500" r="2.600" fill="#d3ecc3"/><path d="M6.500 9.300a2.800 2.800 0 0 1 2.500-2.700" fill="none" stroke="#5b9a2b" stroke-width="1.100"/><path d="M11.900 11.900l4.300 4.300" stroke="#4f9220" stroke-width="3.100"/></svg></div>
<span class="t" style='left:790.90px;top:759.00px;font-size:12.5px;letter-spacing:-0.115px;'>Notes to Table B.1:</span>
<div class="abs" style="left:772px;top:636px;width:219px;height:49.5px;border:1px solid #a2a2a2;background:linear-gradient(#f4f4f4,#fafafa);box-shadow:1px 1px 2px rgba(0,0,0,.22)"></div>
<div class="abs" style="left:797px;top:637px;width:1px;height:24px;background:#e0e0e0"></div>
<div class="mbtn" style="left:777px;top:641px;width:16px;height:16px;border-radius:4px;border-width:1.500px;border-color:#c0e4a0;background:#f5fbf0"><svg style="left:-1px;top:-1px" viewBox="0 0 20 20" width="16" height="16"><circle cx="8.800" cy="8.800" r="4.400" fill="#e3f3d6" stroke="#6aa43b" stroke-width="1.600"/><path d="M12.400 12.400l4 4" stroke="#5c9c2f" stroke-width="3.200"/></svg></div>
<span class="t" style='left:803.40px;top:642.00px;font-size:12px;color:#555;letter-spacing:0.082px;'>Analyse this textblock</span>
<div class="abs" style="left:775px;top:662px;width:213px;height:20px;border:1px solid #a9caf2;border-radius:3px;background:linear-gradient(#f4f9fe,#e6f0fb)"></div>
<svg class="abs" style="left:777px;top:664px" width="16" height="16" viewBox="0 0 16 16"><path d="M2 8l6-6h5v5l-6 6z" fill="#e8e8e8" stroke="#999" stroke-width=".9"/><path d="M3.500 8.500l4-4 3 3-4 4z" fill="#3a8ad8"/><path d="M6 11l3-3 1.500 1.500-3 3z" fill="#5ab030"/><path d="M11 9v4h3z" fill="#e88020"/><circle cx="11" cy="4" r="1" fill="#fff" stroke="#888" stroke-width=".6"/></svg>
<span class="t" style='left:803.40px;top:666.00px;font-size:12px;color:#444;letter-spacing:0.165px;'>Test #scope from this textblock</span>
<div class="abs" style="left:1165px;top:492px;width:16px;height:300px;background:#f1f1f1"></div>
<div class="abs" style="left:1165px;top:537px;width:15px;height:139px;background:#c9c9c9"></div>
<svg class="abs" style="left:1168px;top:498px" width="10" height="7" viewBox="0 0 10 7" fill="none" stroke="#4c4c4c" stroke-width="2.100"><path d="M1.700 5.700l3.300-3.300 3.300 3.300"/></svg>
<div class="cbtn" style="left:1184px;top:12px;width:14px;"><svg viewBox="0 0 15 15" width="15" height="15" style="position:absolute;left:-2px;top:-1px" fill="none" stroke="#44609a" stroke-width="1.400"><path d="M7 4.200L4 7.500l3 3.300M11 4.200L8 7.500l3 3.300" /></svg></div>
<div class="vtext" style="left:1186.500px;top:113px;letter-spacing:.55px">Workflow List</div>
<div class="dots" style="left:1186px;top:114px;width:12px;height:660px"></div>
</body></html>
